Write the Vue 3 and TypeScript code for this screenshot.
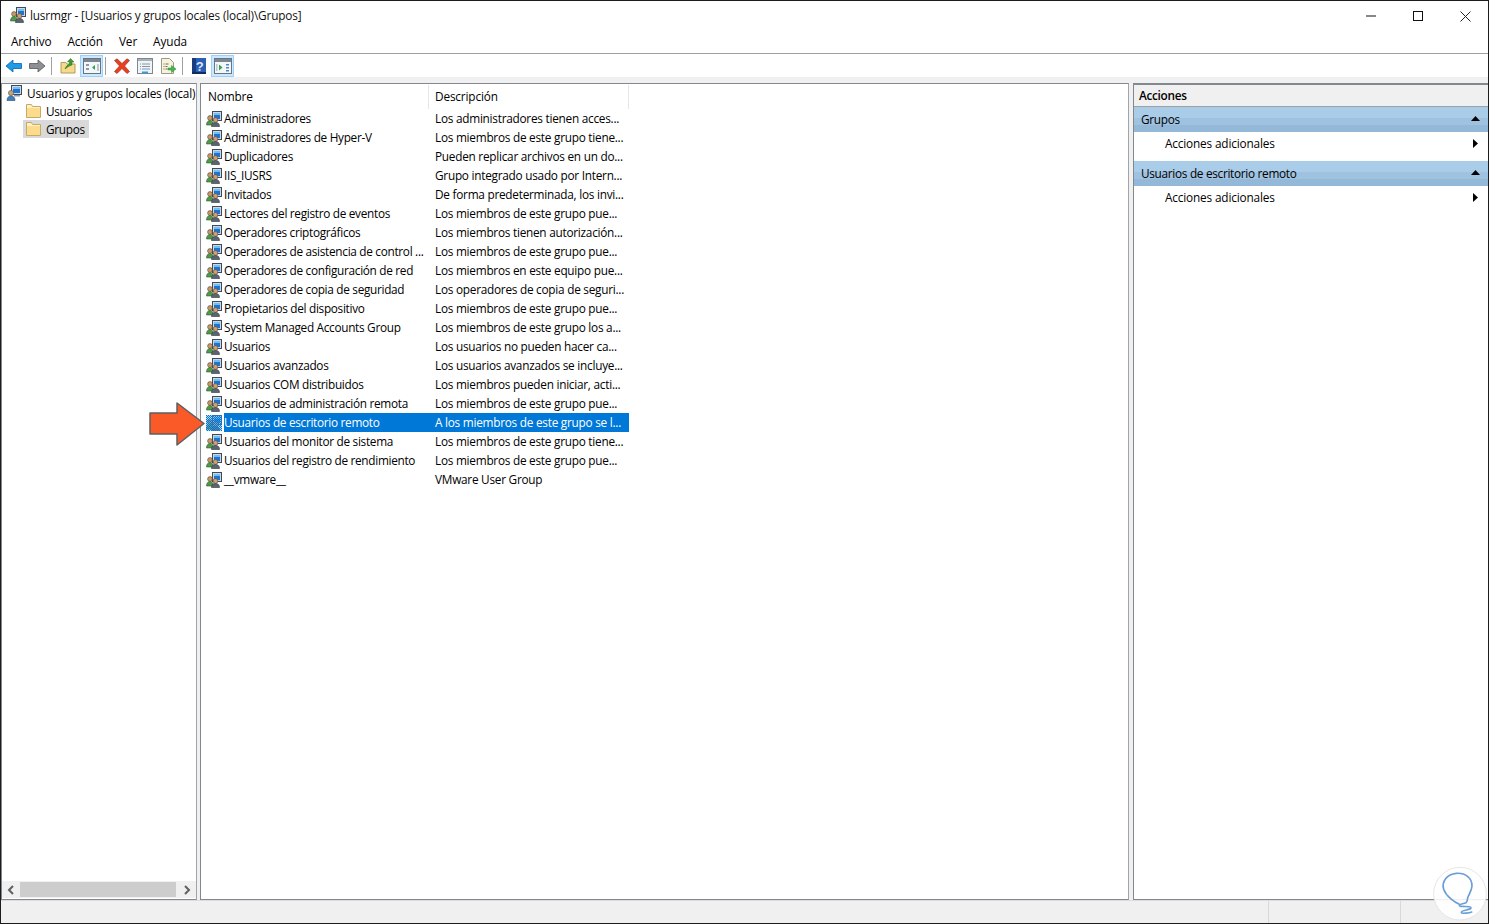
<script setup lang="ts">
interface Group { name: string; desc: string; selected?: boolean }
const groups: Group[] = [
  { name: 'Administradores', desc: 'Los administradores tienen acces...' },
  { name: 'Administradores de Hyper-V', desc: 'Los miembros de este grupo tiene...' },
  { name: 'Duplicadores', desc: 'Pueden replicar archivos en un do...' },
  { name: 'IIS_IUSRS', desc: 'Grupo integrado usado por Intern...' },
  { name: 'Invitados', desc: 'De forma predeterminada, los invi...' },
  { name: 'Lectores del registro de eventos', desc: 'Los miembros de este grupo pue...' },
  { name: 'Operadores criptográficos', desc: 'Los miembros tienen autorización...' },
  { name: 'Operadores de asistencia de control ...', desc: 'Los miembros de este grupo pue...' },
  { name: 'Operadores de configuración de red', desc: 'Los miembros en este equipo pue...' },
  { name: 'Operadores de copia de seguridad', desc: 'Los operadores de copia de seguri...' },
  { name: 'Propietarios del dispositivo', desc: 'Los miembros de este grupo pue...' },
  { name: 'System Managed Accounts Group', desc: 'Los miembros de este grupo los a...' },
  { name: 'Usuarios', desc: 'Los usuarios no pueden hacer ca...' },
  { name: 'Usuarios avanzados', desc: 'Los usuarios avanzados se incluye...' },
  { name: 'Usuarios COM distribuidos', desc: 'Los miembros pueden iniciar, acti...' },
  { name: 'Usuarios de administración remota', desc: 'Los miembros de este grupo pue...' },
  { name: 'Usuarios de escritorio remoto', desc: 'A los miembros de este grupo se l...', selected: true },
  { name: 'Usuarios del monitor de sistema', desc: 'Los miembros de este grupo tiene...' },
  { name: 'Usuarios del registro de rendimiento', desc: 'Los miembros de este grupo pue...' },
  { name: '__vmware__', desc: 'VMware User Group' },
]
const menus = ['Archivo', 'Acción', 'Ver', 'Ayuda']
const sections = ['Grupos', 'Usuarios de escritorio remoto']
</script>

<template>
  <div class="window">
    <header class="titlebar">
      <svg class="ico title-ico" viewBox="0 0 16 16">
        <rect x="6.500" y=".5" width="9" height="9" fill="#cfd8e2" stroke="#3e4a5a" />
        <rect x="8" y="2" width="6" height="6" fill="#1f74d0" />
        <rect x="8" y="2" width="6" height="2" fill="#6ec0f2" />
        <circle cx="4" cy="7" r="2.400" fill="#c99a63" stroke="#54473a" stroke-width=".6" />
        <path d="M.5 14c0-3 1.500-4.500 3.500-4.500S7.500 11 7.500 14z" fill="#4f9a48" stroke="#2f5a2c" stroke-width=".6" />
        <circle cx="9.500" cy="9" r="2.400" fill="#d0a071" stroke="#54473a" stroke-width=".6" />
        <path d="M5.500 15.500c0-2.800 1.500-4 4-4s4 1.200 4 4z" fill="#5b6570" stroke="#2f353c" stroke-width=".6" />
      </svg>
      <span class="title-text">lusrmgr - [Usuarios y grupos locales (local)\Grupos]</span>
      <div class="caption">
        <svg viewBox="0 0 46 29" class="cap"><path d="M17 15h10" stroke="#111" fill="none" /></svg>
        <svg viewBox="0 0 46 29" class="cap"><rect x="18.500" y="10.500" width="9" height="9" stroke="#111" fill="none" /></svg>
        <svg viewBox="0 0 46 29" class="cap"><path d="M19.500 10.500l10 10M29.500 10.500l-10 10" stroke="#222" fill="none" /></svg>
      </div>
    </header>

    <nav class="menubar">
      <span v-for="m in menus" :key="m" class="menu">{{ m }}</span>
    </nav>

    <div class="toolbar">
      <span class="tb">
        <svg class="ico" viewBox="0 0 16 16"><path d="M0 8l7-6v3.500h8.500v5H7V14z" fill="#1c9be8" stroke="#0a62b0" stroke-width=".8" /></svg>
      </span>
      <span class="tb">
        <svg class="ico" viewBox="0 0 16 16"><path d="M16 8L9 2v3.500H.5v5H9V14z" fill="#8d9196" stroke="#55585c" stroke-width=".8" /></svg>
      </span>
      <i class="sep"></i>
      <span class="tb">
        <svg class="ico" viewBox="0 0 16 16">
          <path d="M1 4.500h5l1 1.500h8v9H1z" fill="#f6d98b" stroke="#b89a58" />
          <path d="M5 11c1-3 3-4.500 4.500-5V4L7.500 4 10.500.5 14 4h-2v3c-2 .5-4 1.500-7 4z" fill="#3f9b32" stroke="#27701f" stroke-width=".5" />
        </svg>
      </span>
      <span class="tb on">
        <svg class="ico wide" viewBox="0 0 18 16">
          <rect x=".5" y=".5" width="17" height="15" fill="#f4f7fa" stroke="#6a7480" />
          <rect x="1" y="1" width="16" height="3" fill="#7b8894" />
          <path d="M3 6h3v2H3zM3 10h3v2H3z" fill="#8d99a6" />
          <path d="M12 7v5l-3-2.500z" fill="#2da44a" />
          <path d="M14 6h2v7h-2z" fill="#bcc6d0" />
        </svg>
      </span>
      <i class="sep"></i>
      <span class="tb">
        <svg class="ico wide" viewBox="0 0 18 16">
          <path d="M1.500 2.500L4 .8 9 5.500 14 .8l2.500 1.700L11.500 8l5 5.500L14 15.500 9 10.500 4 15.500l-2.500-2L6.500 8z" fill="#ee3d1e" stroke="#8f3a26" stroke-width=".7" />
        </svg>
      </span>
      <span class="tb">
        <svg class="ico" viewBox="0 0 16 16">
          <rect x=".5" y=".5" width="15" height="15" fill="#f1f3f5" stroke="#7c8791" />
          <rect x="1" y="1" width="14" height="2" fill="#a7b1ba" />
          <path d="M3 6h1M5 6h8M3 8.500h1M5 8.500h8M3 11h1M5 11h8" stroke="#7f97b0" />
          <rect x="5" y="13.500" width="6" height="2" fill="#3a9ad9" />
        </svg>
      </span>
      <span class="tb">
        <svg class="ico" viewBox="0 0 16 16">
          <path d="M1.500.5h8l4 4v11h-12z" fill="#f6f2dc" stroke="#9b9a86" />
          <path d="M3.500 6h1M5.500 6h3M3.500 8.500h1M5.500 8.500h2M3.500 11h1M5.500 11h2" stroke="#6d6d5c" />
          <path d="M8 10h3.500V7.500L16 11l-4.500 3.500V12H8z" fill="#45b649" stroke="#2e8a35" stroke-width=".5" />
        </svg>
      </span>
      <i class="sep"></i>
      <span class="tb">
        <svg class="ico" viewBox="0 0 16 16">
          <rect x="1" width="14" height="16" fill="#2a60b4" />
          <rect x="1" width="4" height="16" fill="#173c80" />
          <rect x="1" y="14" width="14" height="2" fill="#112c60" />
          <text x="8.500" y="13" class="help-mark">?</text>
        </svg>
      </span>
      <span class="tb on">
        <svg class="ico wide" viewBox="0 0 18 16">
          <rect x=".5" y=".5" width="17" height="15" fill="#f4f7fa" stroke="#6a7480" />
          <rect x="1" y="1" width="16" height="3" fill="#7b8894" />
          <path d="M12 6h3v1.500h-3zM12 9h3v1.500h-3zM12 12h3v1.500h-3z" fill="#4f86c4" />
          <path d="M5 6.500v6l3.500-3z" fill="#2da44a" />
          <path d="M2 6h1.500v7H2z" fill="#bcc6d0" />
        </svg>
      </span>
    </div>

    <main class="workspace">
      <aside class="tree pane">
        <div class="tree-body">
          <div class="node root">
            <svg class="ico" viewBox="0 0 16 16">
              <rect x="5.500" y=".5" width="10" height="9" fill="#cfd8e2" stroke="#3e4a5a" />
              <rect x="7" y="2" width="7" height="6" fill="#1f74d0" />
              <rect x="7" y="2" width="7" height="2" fill="#6ec0f2" />
              <rect x="8" y="10" width="6" height="1.500" fill="#8d99a6" />
              <circle cx="5" cy="8" r="2.600" fill="#c9a078" stroke="#4f5a63" stroke-width=".6" />
              <path d="M1 15.500c0-3 1.500-4.500 4-4.500s4 1.500 4 4.500z" fill="#3f7fc0" stroke="#2f4a68" stroke-width=".6" />
            </svg>
            <span class="root-label">Usuarios y grupos locales (local)</span>
          </div>
          <div class="node child">
            <span class="node-in">
              <svg class="folder" viewBox="0 0 16 14"><path d="M1.500.5h5l1 2h8v11h-14z" fill="#fff1c4" stroke="#c9a86a" /><rect x="2" y="4" width="13" height="9" fill="#fbdc8c" /></svg>
              <span>Usuarios</span>
            </span>
          </div>
          <div class="node child">
            <span class="node-in current">
              <svg class="folder" viewBox="0 0 16 14"><path d="M1.500.5h5l1 2h8v11h-14z" fill="#fff1c4" stroke="#c9a86a" /><rect x="2" y="4" width="13" height="9" fill="#fbdc8c" /></svg>
              <span>Grupos</span>
            </span>
          </div>
        </div>
        <div class="hscroll">
          <svg class="chev" viewBox="0 0 16 16"><path d="M10 4L6 8l4 4" fill="none" stroke="#606060" stroke-width="2" /></svg>
          <div class="thumb"></div>
          <svg class="chev" viewBox="0 0 16 16"><path d="M6 4l4 4-4 4" fill="none" stroke="#606060" stroke-width="2" /></svg>
        </div>
      </aside>

      <section class="list pane">
        <div class="list-head">
          <span class="col c-name">Nombre</span>
          <span class="col c-desc">Descripción</span>
        </div>
        <div v-for="g in groups" :key="g.name" class="row" :class="{ selected: g.selected }">
          <svg class="ico row-ico" viewBox="0 0 16 16">
            <rect x="6.500" y=".5" width="9" height="9" fill="#cfd8e2" stroke="#3e4a5a" />
            <rect x="8" y="2" width="6" height="6" fill="#1f74d0" />
            <rect x="8" y="2" width="6" height="2" fill="#6ec0f2" />
            <circle cx="4" cy="7" r="2.400" fill="#c99a63" stroke="#54473a" stroke-width=".6" />
            <path d="M.5 14c0-3 1.500-4.500 3.500-4.500S7.500 11 7.500 14z" fill="#4f9a48" stroke="#2f5a2c" stroke-width=".6" />
            <circle cx="9.500" cy="9" r="2.400" fill="#d0a071" stroke="#54473a" stroke-width=".6" />
            <path d="M5.500 15.500c0-2.800 1.500-4 4-4s4 1.200 4 4z" fill="#5b6570" stroke="#2f353c" stroke-width=".6" />
            <template v-if="g.selected">
              <defs>
                <pattern id="dither" width="2" height="2" patternUnits="userSpaceOnUse">
                  <rect width="1" height="1" fill="#0078d7" />
                  <rect x="1" y="1" width="1" height="1" fill="#0078d7" />
                </pattern>
              </defs>
              <rect width="16" height="16" fill="#5aa6e6" fill-opacity=".45" />
              <rect width="16" height="16" fill="url(#dither)" />
            </template>
          </svg>
          <span class="cell-name">{{ g.name }}</span>
          <span class="cell-desc">{{ g.desc }}</span>
        </div>
      </section>

      <aside class="actions pane">
        <div class="act-title">Acciones</div>
        <template v-for="s in sections" :key="s">
          <div class="act-head">
            <span>{{ s }}</span>
            <svg class="tri-up" viewBox="0 0 9 5"><path d="M4.500 0L9 5H0z" fill="#000" /></svg>
          </div>
          <div class="act-item">
            <span>Acciones adicionales</span>
            <svg class="tri-right" viewBox="0 0 5 9"><path d="M0 0l5 4.500L0 9z" fill="#000" /></svg>
          </div>
        </template>
      </aside>
    </main>

    <footer class="statusbar">
      <i class="st st-a"></i>
      <i class="st st-b"></i>
    </footer>

    <svg class="arrow" viewBox="0 0 58 44">
      <path d="M1 11h27V1l27 20.500L28 43V32H1z" fill="#fa5a28" stroke="#5c5f61" stroke-width="1.500" stroke-linejoin="round" />
    </svg>

    <svg class="mark" viewBox="0 0 447 222">
      <circle cx="360" cy="131" r="79" fill="#fff" fill-opacity=".88" stroke="#e6e6e6" stroke-width="3" />
      <path d="M358 163c-14-6-40-24-47-45-7-24 10-45 38-48 28-2 48 15 47 38-1 15-10 25-13 36-2 7 0 10-5 14-8 4-19 3-20 8-1 7 36 0 35 8-1 6-30 6-29 13 0 6 26 1 31-1" fill="none" stroke="#6a9ed8" stroke-width="5" stroke-linecap="round" stroke-linejoin="round" />
    </svg>
  </div>
</template>

<style scoped>
.window {
  position: relative;
  width: 1489px;
  height: 924px;
  box-sizing: border-box;
  border: 1px solid #1c1c1c;
  background: #fff;
  display: flex;
  flex-direction: column;
  overflow: hidden;
  font-family: "Open Sans", "Noto Sans", sans-serif;
  font-size: 11.8px;
  letter-spacing: -0.3px;
  color: #000;
}
.titlebar {
  height: 29px;
  display: flex;
  align-items: center;
  padding-left: 9px;
  flex: none;
}
.title-ico { margin-right: 4px; margin-top: -1px; }
.title-text { color: #111; margin-top: -1px; letter-spacing: -0.17px; }
.caption { margin-left: auto; display: flex; margin-right: 1px; }
.cap { width: 46px; height: 29px; display: block; }
.ico { width: 16px; height: 16px; display: block; flex: none; }
.wide { width: 18px; }
.menubar {
  height: 23px;
  padding-bottom: 1px;
  box-sizing: border-box;
  height: 24px;
  border-bottom: 1px solid #a0a0a0;
  display: flex;
  align-items: center;
  padding-left: 10px;
  gap: 16px;
  flex: none;
}
.menu { letter-spacing: -0.1px; }
.toolbar {
  height: 23px;
  display: flex;
  align-items: center;
  padding-left: 2px;
  flex: none;
  background: #fff;
}
.tb {
  width: 23px;
  height: 22px;
  box-sizing: border-box;
  display: flex;
  align-items: center;
  justify-content: center;
  padding-right: 1px;
}
.tb.on { background: #cce8ff; border: 1px solid #99d1ff; padding-right: 0; }
.sep { width: 1px; height: 18px; background: #a0a0a0; margin: 0 5px 0 2px; }
.help-mark {
  font: bold 13px "Liberation Sans", sans-serif;
  fill: #dfe6ff;
  text-anchor: middle;
}
.workspace {
  flex: 1;
  min-height: 0;
  background: #f0f0f0;
  padding-top: 6px;
  display: flex;
  align-items: stretch;
}
.pane {
  background: #fff;
  box-sizing: border-box;
  border: 1px solid #828790;
  border-right-color: #a0a4ab;
}
.tree {
  width: 196px;
  flex: none;
  display: flex;
  flex-direction: column;
}
.tree-body { flex: 1; }
.node { height: 18px; display: flex; align-items: center; white-space: nowrap; }
.root { padding-left: 4px; gap: 5px; }
.root-label { letter-spacing: -0.2px; }
.child { padding-left: 21px; }
.node-in { display: flex; align-items: center; height: 18px; padding: 0 4px 0 2px; gap: 5px; }
.current { background: #d9d9d9; }
.folder { width: 16px; height: 14px; display: block; flex: none; }
.hscroll {
  height: 17px;
  margin-bottom: 1px;
  background: #f0f0f0;
  display: flex;
  align-items: center;
}
.chev { width: 16px; height: 16px; flex: none; margin: 0 1px; }
.thumb { flex: 1; height: 15px; background: #cdcdcd; margin: 0 2px 0 0; }
.list {
  width: 929px;
  flex: none;
  margin-left: 3px;
}
.list-head { height: 25px; display: flex; align-items: center; }
.col { height: 24px; padding-bottom: 2px; display: flex; align-items: center; box-sizing: border-box; padding-left: 6px; border-right: 1px solid #e5e5e5; letter-spacing: -0.15px; }
.c-name { width: 228px; padding-left: 7px; }
.c-desc { width: 200px; }
.row {
  height: 19px;
  width: 428px;
  display: flex;
  align-items: center;
  white-space: nowrap;
  padding-left: 5px;
  box-sizing: border-box;
}
.row-ico { margin-right: 2px; }
.cell-name { width: 211px; box-sizing: border-box; height: 19px; line-height: 19px; }
.cell-desc { flex: 1; height: 19px; line-height: 19px; letter-spacing: -0.25px; }
.selected .cell-name, .selected .cell-desc { background: #0078d7; color: #fff; }
.actions { flex: 1; margin-left: 4px; border-top-width: 2px; border-right: none; }
.act-title {
  height: 21px;
  background: #f0f0f0;
  border-bottom: 1px solid #a0a0a0;
  display: flex;
  align-items: center;
  padding: 0 0 2px 5px;
  box-sizing: content-box;
  height: 19px;
  font-weight: 600;
}
.act-head {
  height: 25px;
  box-sizing: border-box;
  display: flex;
  align-items: center;
  justify-content: space-between;
  padding: 0 7px 2px;
  background: linear-gradient(#a9cce9 0, #a9cce9 11px, #9fc2e1 11px, #9fc2e1 18px, #94b8d7 18px);
}
.tri-up { width: 9px; height: 5px; display: block; margin-right: 1px; }
.act-item {
  height: 29px;
  padding: 0 10px 7px 31px;
  box-sizing: border-box;
  display: flex;
  align-items: center;
  justify-content: space-between;
  letter-spacing: -0.16px;
}
.tri-right { width: 5px; height: 9px; display: block; }
.statusbar {
  height: 23px;
  flex: none;
  background: #f0f0f0;
  border-top: 1px solid #dcdcdc;
  display: flex;
  box-sizing: border-box;
}
.st { width: 1px; background: #d9d9d9; }
.st-a { margin-left: 1267px; }
.st-b { margin-left: 131px; }
.arrow { position: absolute; left: 148px; top: 401px; width: 58px; height: 44px; }
.mark { position: absolute; left: 1339px; top: 849px; width: 149px; height: 74px; }
</style>
